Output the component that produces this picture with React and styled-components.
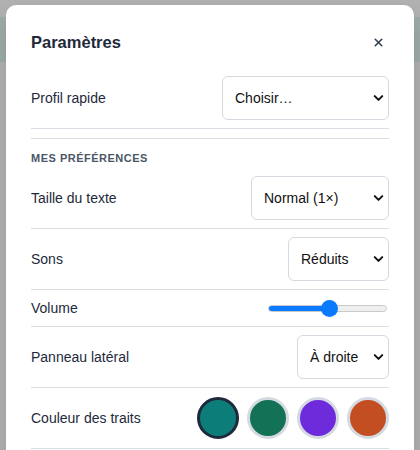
import React, { useState } from 'react';
import styled, { createGlobalStyle } from 'styled-components';
import { ChevronDown, X } from 'lucide-react';

const GlobalStyle = createGlobalStyle`
    html, body {
        margin: 0;
        padding: 0;
        background: #b3b3b3;
        font-family: "Liberation Sans", Arial, sans-serif;
    }
    * {
        box-sizing: border-box;
    }
`;

const Backdrop = styled.div`
    position: relative;
    width: 420px;
    height: 450px;
    overflow: hidden;
    background: #b3b3b3;
    padding: 5px 6px 0;
`;

// bande de l'en-tête de la page derrière la modale
const PageHeader = styled.div`
    position: absolute;
    left: 0;
    right: 0;
    top: 17px;
    height: 45px;
    background: #9fadab;
`;

const Modal = styled.div`
    position: relative;
    background: #ffffff;
    border-radius: 10px;
    height: 470px;
    padding: 24px 25px 0 25px;
    box-shadow: 0 10px 30px rgba(0, 0, 0, 0.15);
`;

const Header = styled.div`
    display: flex;
    align-items: center;
    justify-content: space-between;
    height: 26px;
    margin-bottom: 13px;
`;

const Title = styled.h2`
    margin: 0;
    font-size: 16.5px;
    font-weight: 700;
    color: #1e293b;
`;

const CloseButton = styled.button`
    border: none;
    background: none;
    padding: 0;
    margin-right: 4px;
    display: flex;
    color: #334155;
    cursor: pointer;
`;

const Row = styled.div`
    display: flex;
    align-items: center;
    justify-content: space-between;
    padding: 8px 0;
    min-height: ${(p) => (p.$compact ? '37px' : '61px')};
    border-bottom: 1px solid #d9dee5;
`;

const Label = styled.span`
    font-size: 14px;
    color: #1e293b;
`;

const Section = styled.div`
    margin-top: 9px;
    border-top: 1px solid #d9dee5;
`;

const SectionTitle = styled.div`
    padding-top: 12px;
    margin-bottom: 3px;
    line-height: 14px;
    font-size: 11px;
    font-weight: 700;
    letter-spacing: 0.5px;
    text-transform: uppercase;
    color: #4b5768;
`;

const SelectWrap = styled.div`
    position: relative;
    width: ${(p) => p.$width}px;
    height: 44px;
`;

const NativeSelect = styled.select`
    appearance: none;
    -webkit-appearance: none;
    width: 100%;
    height: 100%;
    border: 1px solid #d4d9e0;
    border-radius: 6px;
    background: #ffffff;
    padding: 0 22px 0 12px;
    font-family: inherit;
    font-size: 14px;
    color: #111111;
    outline: none;
`;

const Chevron = styled(ChevronDown)`
    position: absolute;
    right: 3px;
    top: 50%;
    transform: translateY(-50%);
    pointer-events: none;
    color: #111111;
`;

const Range = styled.input`
    appearance: none;
    -webkit-appearance: none;
    width: 119px;
    height: 7px;
    margin: 0 2px 0 0;
    border-radius: 4px;
    border: 1px solid #c9c9c9;
    outline: none;

    &::-webkit-slider-thumb {
        -webkit-appearance: none;
        width: 17px;
        height: 17px;
        border-radius: 50%;
        background: #0a7aff;
        border: none;
    }
`;

const Swatches = styled.div`
    display: flex;
    gap: 8px;
`;

const Swatch = styled.button`
    width: 42px;
    height: 42px;
    border-radius: 50%;
    padding: 0;
    background: ${(p) => p.$color};
    border: 3px solid ${(p) => (p.$active ? '#1e293b' : '#d5dae2')};
    cursor: pointer;
`;

const Select = ({ width, value, options }) => (
    <SelectWrap $width={width}>
        <NativeSelect defaultValue={value}>
            {options.map((o) => (
                <option key={o}>{o}</option>
            ))}
        </NativeSelect>
        <Chevron size={15} strokeWidth={3.2} />
    </SelectWrap>
);

const colors = ['#0c7d78', '#137155', '#6d2bdb', '#c24e22'];

export default function App() {
    const [volume, setVolume] = useState(52);
    const [color, setColor] = useState(0);

    return (
        <Backdrop>
            <GlobalStyle />
            <PageHeader />
            <Modal>
                <Header>
                    <Title>Paramètres</Title>
                    <CloseButton aria-label="Fermer">
                        <X size={13} strokeWidth={3} />
                    </CloseButton>
                </Header>

                <Row>
                    <Label>Profil rapide</Label>
                    <Select width={167} value="Choisir…" options={['Choisir…', 'Débutant', 'Expert']} />
                </Row>

                <Section>
                    <SectionTitle>Mes préférences</SectionTitle>

                    <Row>
                        <Label>Taille du texte</Label>
                        <Select width={138} value="Normal (1×)" options={['Petit (0.8×)', 'Normal (1×)', 'Grand (1.5×)']} />
                    </Row>

                    <Row>
                        <Label>Sons</Label>
                        <Select width={101} value="Réduits" options={['Activés', 'Réduits', 'Coupés']} />
                    </Row>

                    <Row $compact>
                        <Label>Volume</Label>
                        <Range
                            type="range"
                            min="0"
                            max="100"
                            value={volume}
                            onChange={(e) => setVolume(Number(e.target.value))}
                            style={{
                                background: `linear-gradient(to right, #0a7aff ${volume}%, #efefef ${volume}%)`,
                            }}
                        />
                    </Row>

                    <Row>
                        <Label>Panneau latéral</Label>
                        <Select width={92} value="À droite" options={['À gauche', 'À droite']} />
                    </Row>

                    <Row>
                        <Label>Couleur des traits</Label>
                        <Swatches>
                            {colors.map((c, i) => (
                                <Swatch
                                    key={c}
                                    $color={c}
                                    $active={i === color}
                                    onClick={() => setColor(i)}
                                />
                            ))}
                        </Swatches>
                    </Row>
                </Section>
            </Modal>
        </Backdrop>
    );
}
